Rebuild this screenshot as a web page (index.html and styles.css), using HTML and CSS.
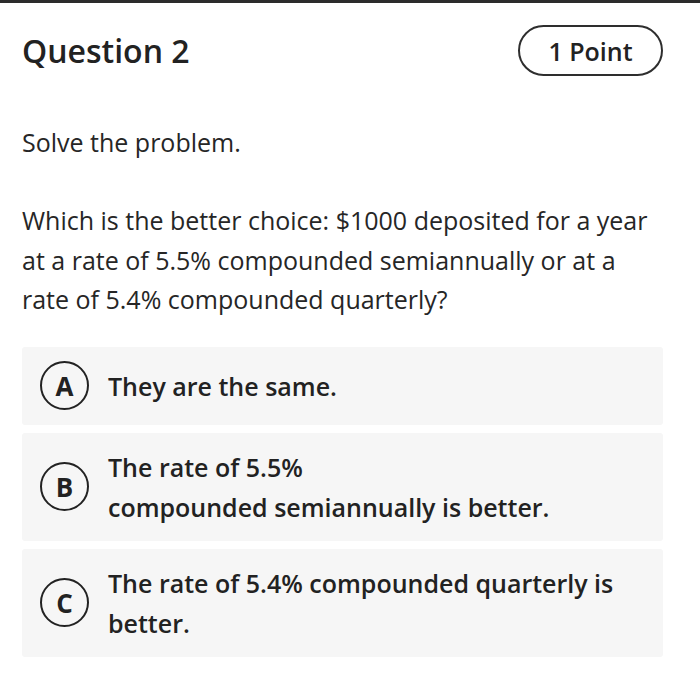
FILE: index.html
```html
<!DOCTYPE html>
<html lang="en">
<head>
<meta charset="utf-8">
<title>Question 2</title>
<link rel="stylesheet" href="styles.css">
</head>
<body>
<div class="topbar"></div>
<main class="page">
  <header class="qhead">
    <h1 class="qtitle">Question 2</h1>
    <span class="points">1 Point</span>
  </header>
  <p class="instr">Solve the problem.</p>
  <p class="qtext">Which is the better choice: $1000 deposited for a year at a rate of 5.5% compounded semiannually or at a rate of 5.4% compounded quarterly?</p>
  <ul class="options">
    <li class="option"><span class="letter">A</span><span class="otext">They are the same.</span></li>
    <li class="option"><span class="letter">B</span><span class="otext">The rate of 5.5%<br>compounded semiannually is better.</span></li>
    <li class="option"><span class="letter">C</span><span class="otext">The rate of 5.4% compounded quarterly is better.</span></li>
  </ul>
</main>
</body>
</html>
```
FILE: styles.css
```css
* { box-sizing: border-box; }
html, body { margin: 0; padding: 0; background: #ffffff; }
body {
  font-family: "Open Sans", "Liberation Sans", sans-serif;
  color: #262626;
}
.topbar { height: 3px; background: #2c2c2c; }
.page { padding: 0 37px 0 22px; }
.qhead {
  display: flex;
  justify-content: space-between;
  align-items: center;
  margin-top: 22px;
  height: 51px;
}
.qtitle {
  margin: 0;
  font-size: 32px;
  font-weight: 600;
  color: #222;
}
.points {
  display: inline-flex;
  align-items: center;
  justify-content: center;
  width: 145px;
  height: 51px;
  border: 2px solid #2e2e2e;
  border-radius: 26px;
  font-size: 25px;
  font-weight: 600;
  color: #222;
}
.instr {
  margin: 47px 0 0;
  font-size: 25px;
  line-height: 39px;
}
.qtext {
  margin: 39px 0 0;
  font-size: 25px;
  line-height: 39.5px;
}
.options {
  list-style: none;
  margin: 27px 0 0;
  padding: 0;
  display: flex;
  flex-direction: column;
  gap: 8px;
}
.option {
  display: flex;
  align-items: center;
  gap: 19px;
  background: #f6f6f6;
  border-radius: 3px;
  padding: 14px 18px;
  min-height: 78px;
}
.letter {
  flex: none;
  width: 49px;
  height: 49px;
  border: 2.5px solid #222;
  border-radius: 50%;
  display: flex;
  align-items: center;
  justify-content: center;
  font-size: 26px;
  font-weight: 700;
  color: #222;
}
.otext {
  font-size: 25px;
  font-weight: 600;
  line-height: 40px;
  color: #222;
}
```
